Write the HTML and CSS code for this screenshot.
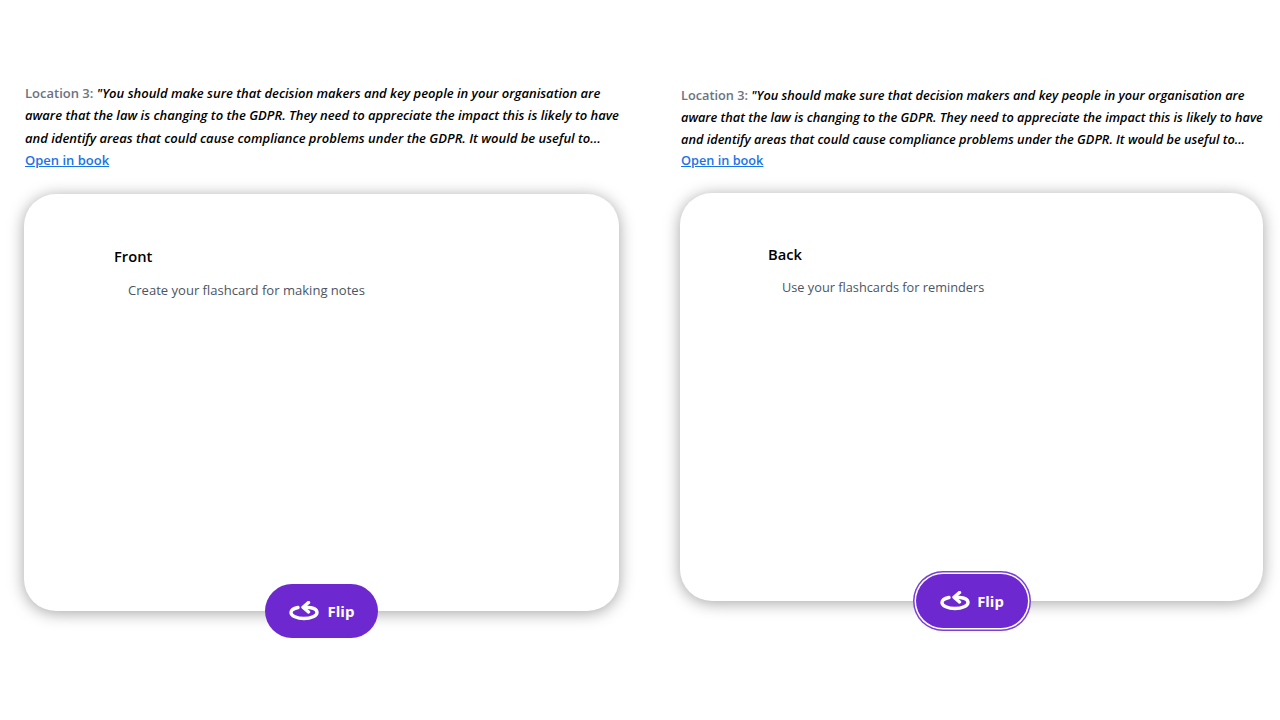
FILE: index.html
```html
<!DOCTYPE html>
<html lang="en">
<head>
  <meta charset="UTF-8">
  <meta name="viewport" content="width=device-width, initial-scale=1.0">
  <title>Flashcards</title>
  <link rel="stylesheet" href="styles.css">
</head>
<body>
  <div class="panel panel-front">
    <p class="quote">
      <span class="location">Location 3:</span> <em>"You should make sure that decision makers and key people in your organisation are aware that the law is changing to the GDPR. They need to appreciate the impact this is likely to have and identify areas that could cause compliance problems under the GDPR. It would be useful to...</em><br>
      <a href="#">Open in book</a>
    </p>
    <div class="card">
      <h2>Front</h2>
      <p class="card-text">Create your flashcard for making notes</p>
      <button class="flip">
        <svg width="30" height="20" viewBox="0 0 30 20" fill="none" stroke="#fff" stroke-width="3.4" stroke-linecap="round" stroke-linejoin="round"><path d="M9 6.500C4.500 7.500 2 9.200 2 11.500 2 15 8 17.500 15 17.500S28 15 28 11.500C28 8 22.500 6.300 16 6.200"/><path d="M19.500 1.500 14 6.200 19.500 11"/></svg>
        Flip
      </button>
    </div>
  </div>
  <div class="panel panel-back">
    <p class="quote">
      <span class="location">Location 3:</span> <em>"You should make sure that decision makers and key people in your organisation are aware that the law is changing to the GDPR. They need to appreciate the impact this is likely to have and identify areas that could cause compliance problems under the GDPR. It would be useful to...</em><br>
      <a href="#">Open in book</a>
    </p>
    <div class="card">
      <h2>Back</h2>
      <p class="card-text">Use your flashcards for reminders</p>
      <button class="flip flip-focus">
        <svg width="30" height="20" viewBox="0 0 30 20" fill="none" stroke="#fff" stroke-width="3.4" stroke-linecap="round" stroke-linejoin="round"><path d="M9 6.500C4.500 7.500 2 9.200 2 11.500 2 15 8 17.500 15 17.500S28 15 28 11.500C28 8 22.500 6.300 16 6.200"/><path d="M19.500 1.500 14 6.200 19.500 11"/></svg>
        Flip
      </button>
    </div>
  </div>
</body>
</html>
```

FILE: styles.css
```css
html, body {
  height: 720px;
  overflow: hidden;
}
body {
  margin: 0;
  display: flex;
  font-family: "Open Sans", sans-serif;
  background: #fff;
}
.panel-front {
  width: 595px;
  margin-left: 24px;
  padding-top: 82px;
}
.panel-back {
  width: 583px;
  margin-left: 61px;
  padding-top: 85px;
}
.quote {
  margin: 0;
  padding-left: 1px;
  font-size: 13px;
  font-weight: 600;
  line-height: 22.4px;
  color: #000;
}
.panel-back .quote {
  font-size: 12.74px;
  line-height: 21.8px;
}
.location {
  color: #6b7280;
}
.quote em {
  font-style: italic;
}
.quote a {
  color: #1a73e8;
}
.card {
  position: relative;
  box-sizing: border-box;
  height: 417px;
  margin-top: 22px;
  padding: 51px 0 0 90px;
  background: #fff;
  border-radius: 32px;
  box-shadow: 0 2px 16px rgba(0, 0, 0, 0.36);
}
.panel-back .card {
  height: 408px;
  margin-top: 21px;
  padding: 50px 0 0 88px;
}
.card h2 {
  margin: 0;
  font-size: 14.7px;
  font-weight: 600;
  line-height: 22px;
  color: #000;
}
.card-text {
  margin: 13px 0 0 14px;
  font-size: 13.05px;
  line-height: 20px;
  color: #4b5563;
}
.panel-back .card-text {
  margin-top: 12px;
  font-size: 12.75px;
}
.flip {
  position: absolute;
  left: 241px;
  bottom: -27px;
  width: 113px;
  height: 54px;
  display: flex;
  align-items: center;
  justify-content: center;
  gap: 9px;
  padding: 0;
  border: none;
  border-radius: 28px;
  background: #6d28d0;
  color: #fff;
  font-family: "Open Sans", sans-serif;
  font-size: 15px;
  font-weight: 700;
}
.flip-focus {
  left: 236px;
  width: 112px;
  gap: 7px;
  font-size: 14.800px;
  box-shadow: 0 0 0 1.5px #fff, 0 0 0 3px #7b3fd6;
}
```
